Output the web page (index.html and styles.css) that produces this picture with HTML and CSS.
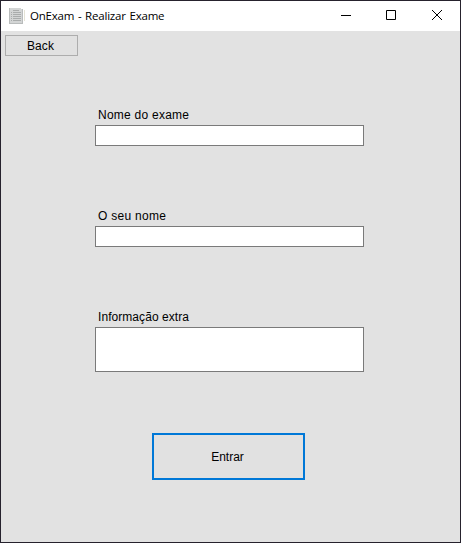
FILE: index.html
```html
<!DOCTYPE html>
<html lang="pt">
<head>
<meta charset="utf-8">
<title>OnExam - Realizar Exame</title>
<link rel="stylesheet" href="styles.css">
</head>
<body>
<div class="window">
  <header class="titlebar">
    <svg class="app-icon" width="17" height="16" viewBox="0 0 17 16" shape-rendering="crispEdges">
      <path fill="#d3d5d5" d="M0 0h12v1h2v15H0z"/>
      <path fill="#b9bcbc" d="M0 0h1v16H0zM13 1h1v15h-1zM1 15h12v1H1z"/>
      <path fill="#a9acac" d="M4 2h6v1H4zM2 4h1v1H2zM4 4h8v1H4zM2 6h1v1H2zM4 6h8v1H4zM2 8h1v1H2zM4 8h8v1H4zM2 10h1v1H2zM4 10h8v1H4zM2 12h1v1H2zM4 12h8v1H4z"/>
      <path fill="#e4e3d6" d="M15 2h1v11h-1z"/>
    </svg>
    <span class="title">OnExam - Realizar Exame</span>
    <div class="controls">
      <svg width="46" height="30" viewBox="0 0 46 30"><path fill="#000" d="M19 14h10v1H19z"/></svg>
      <svg width="46" height="30" viewBox="0 0 46 30"><path fill="none" stroke="#000" d="M18.500 9.500h9v9h-9z"/></svg>
      <svg width="46" height="30" viewBox="0 0 46 30"><path fill="none" stroke="#000" stroke-width="1" d="M18 9l10 10M28 9L18 19"/></svg>
    </div>
  </header>
  <main class="content">
    <button class="back">Back</button>
    <form class="form">
      <label class="field"><span class="caption name">Nome do exame</span><input class="box" type="text"></label>
      <label class="field"><span class="caption own">O seu nome</span><input class="box" type="text"></label>
      <label class="field"><span class="caption info">Informação extra</span><textarea class="box tall"></textarea></label>
      <button class="enter" type="button">Entrar</button>
    </form>
  </main>
</div>
</body>
</html>
```
FILE: styles.css
```css
* { box-sizing: border-box; }
body { margin: 0; overflow: hidden; }
.window {
  width: 461px;
  height: 543px;
  display: flex;
  flex-direction: column;
  border: 1px solid #26222d;
  background: #e2e2e2;
  color: #000;
  font: 12px/15px "Liberation Sans", Arial, sans-serif;
}
.titlebar {
  height: 30px;
  flex: none;
  display: flex;
  align-items: center;
  padding-left: 8px;
  background: #fff;
}
.app-icon { flex: none; }
.title {
  margin-left: 4px;
  font: 11.5px/16px "Open Sans", "Noto Sans", sans-serif;
  letter-spacing: -0.2px;
  word-spacing: 0.9px;
  white-space: nowrap;
}
.controls { display: flex; margin-left: auto; }
.controls svg { display: block; }
.content { padding: 4px; }
button { font: inherit; color: inherit; background: #e1e1e1; padding: 0; border-radius: 0; }
.back {
  display: block;
  width: 73px;
  height: 21px;
  padding: 2px 2px 0 0;
  border: 1px solid #adadad;
  letter-spacing: 0.1px;
}
.form {
  display: flex;
  flex-direction: column;
  width: 269px;
  margin: 51px 0 0 90px;
}
.field { display: block; margin-bottom: 62px; }
.caption { display: block; height: 18px; padding: 1px 0 0 3px; white-space: nowrap; }
.name { letter-spacing: 0.25px; }
.own { letter-spacing: 0.28px; }
.info { letter-spacing: 0.06px; }
.box {
  display: block;
  width: 269px;
  height: 21px;
  margin: 0;
  padding: 1px 3px;
  border: 1px solid #7a7a7a;
  border-radius: 0;
  background: #fff;
  font: inherit;
  outline: none;
  resize: none;
}
.tall { height: 45px; }
.enter {
  width: 153px;
  height: 47px;
  margin: -1px 0 0 57px;
  padding: 2px 2px 0 0;
  border: 2px solid #0078d7;
}
```
